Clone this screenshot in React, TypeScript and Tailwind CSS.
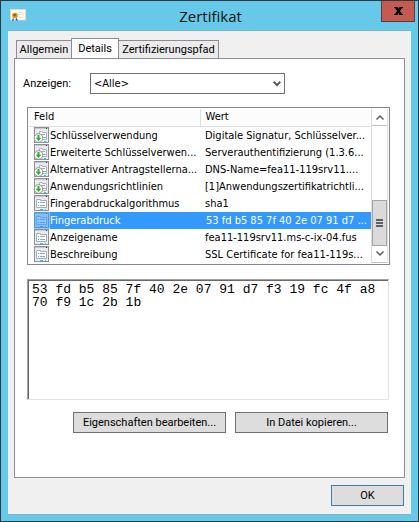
import React, { useState } from "react";

type Field = { name: string; value: string; extension?: boolean };

const fields: Field[] = [
  { name: "Schlüsselverwendung", value: "Digitale Signatur, Schlüsselver...", extension: true },
  { name: "Erweiterte Schlüsselverwen...", value: "Serverauthentifizierung (1.3.6...", extension: true },
  { name: "Alternativer Antragstellerna...", value: "DNS-Name=fea11-119srv11....", extension: true },
  { name: "Anwendungsrichtlinien", value: "[1]Anwendungszertifikatrichtli...", extension: true },
  { name: "Fingerabdruckalgorithmus", value: "sha1" },
  { name: "Fingerabdruck", value: "53 fd b5 85 7f 40 2e 07 91 d7 ..." },
  { name: "Anzeigename", value: "fea11-119srv11.ms-c-ix-04.fus" },
  { name: "Beschreibung", value: "SSL Certificate for fea11-119s..." },
];

function CertificateIcon() {
  return (
    <svg width="16" height="13" viewBox="0 0 16 13" aria-hidden="true" className="shrink-0">
      <rect x="0.5" y="0.5" width="15" height="10.5" fill="#fbfaf7" stroke="#f3d5b0" />
      <path d="M8 3.5h5M8 5.5h5M9 8.5h4" stroke="#dcdfe8" />
      <path d="M3 8l-1 4.5 2-1.5zM6.500 8l1.500 4.500-2.500-1.500z" fill="#2f62c4" />
      <circle cx="5" cy="6.500" r="2.800" fill="#d99a10" />
      <circle cx="4.600" cy="6" r="1.200" fill="#8f5f08" />
    </svg>
  );
}

function FieldIcon({ extension, selected }: { extension?: boolean; selected: boolean }) {
  return (
    <svg width="17" height="17" viewBox="0 0 17 17" aria-hidden="true" className="block shrink-0">
      <rect x="1.500" y="0.500" width="14" height="15" fill="#e9ebee" stroke="#8b9095" />
      <path d="M2 1.500h13" stroke="#c3c9ce" />
      <path d="M13 1.500h1" stroke="#3a4046" />
      {extension ? (
        <g>
          <path d="M6.500 12.500v-8h3v1h4v7z" fill="#fafbfc" stroke="#b0b4c0" />
          <path d="M8 7.500h4M10 10.500h3" stroke="#a3a6b2" />
          <path d="M11 14.500h2" stroke="#18d0f5" />
          <circle cx="5.500" cy="11" r="4.300" fill="#fff" stroke="#8b9095" />
          <path d="M4.500 8h2v2.800h1.800L5.500 13.900 2.700 10.800h1.800z" fill="#2fae22" />
        </g>
      ) : (
        <g>
          <path d="M3.500 12.500v-8h4v1h6v7z" fill="#fafbfc" stroke="#a9adba" />
          <path d="M7 7.500h5M7 10.500h5" stroke="#a3a6b2" />
          <path d="M5 7.500h1M5 10.500h1" stroke="#18c5ee" />
          <path d="M7 14.500h3M12 14.500h1" stroke="#18d0f5" />
        </g>
      )}
      {selected && <rect x="1" width="16" height="17" fill="#3399ff" fillOpacity="0.550" />}
    </svg>
  );
}

const tabs = [
  { name: "Allgemein", width: "w-[55px]" },
  { name: "Details", width: "w-12" },
  { name: "Zertifizierungspfad", width: "w-[100px]" },
];

export default function App() {
  const [active, setActive] = useState("Details");
  const [selected, setSelected] = useState("Fingerabdruck");

  return (
    <div className="flex min-h-screen w-full flex-col border border-[#2f3840] bg-[#66c9ea] px-[7px] pb-1.5 font-['DejaVu_Sans_Condensed','DejaVu_Sans',sans-serif] text-[11px] leading-[17px] text-black">
      <header className="flex h-[29px] items-start">
        <div className="w-8 shrink-0 pt-2 pl-0.5">
          <CertificateIcon />
        </div>
        <h1 className="flex-1 text-center font-['Open_Sans',sans-serif] text-[15px] leading-[30px] text-[#111]">Zertifikat</h1>
        <button aria-label="Schließen" className="-mr-1 flex h-[21px] w-[34px] items-center justify-center border border-t-0 border-[#5d3a40] bg-[#c55a50]">
          <svg width="9" height="8" viewBox="0 0 9 8" aria-hidden="true">
            <path d="M0 0h3.500l1 1.800L5.500 0H9v1H8L6 4l2 3h1v1H5.500l-1-1.800L3.500 8H0V7h1l2-3-2-3H0z" fill="#000" />
          </svg>
        </button>
      </header>

      <main className="flex flex-1 flex-col border-y border-[#7fb3ca] bg-[#f0f0f0] px-1.5 pt-[7px]">
        <div role="tablist" className="-mb-px flex items-end pl-0.5 font-['Roboto',sans-serif]">
          {tabs.map(({ name, width }) => (
            <button
              key={name}
              role="tab"
              aria-selected={name === active}
              onClick={() => setActive(name)}
              className={`${width} whitespace-nowrap ${
                name === active
                  ? "h-[21px] border border-b-0 border-[#8c8c98] bg-white pb-0.5"
                  : "h-[19px] border border-[#8c8c98] bg-[#ebebeb] first:border-r-0 last:border-l-0"
              }`}
            >
              {name}
            </button>
          ))}
        </div>

        <section className="flex flex-1 flex-col border border-[#8c8c98] bg-white px-3 pt-3.5">
          <div className="flex items-center">
            <label htmlFor="show" className="-ml-1 w-[67px] shrink-0 font-['Roboto',sans-serif]">Anzeigen:</label>
            <div className="relative h-[21px] w-[195px]">
              <select id="show" className="h-full w-full appearance-none border border-[#707070] bg-white pl-[3px]">
                <option>&lt;Alle&gt;</option>
              </select>
              <svg width="8" height="6" viewBox="0 0 8 6" aria-hidden="true" className="pointer-events-none absolute top-2 right-1">
                <path d="M0.700 0.800L4 4.100l3.300-3.300" fill="none" stroke="#555" strokeWidth="2" />
              </svg>
            </div>
          </div>

          <div className="mt-[13px] mr-[2px] flex border border-[#828790] p-px">
            <table className="min-w-0 flex-1 table-fixed border-collapse whitespace-nowrap">
              <thead>
                <tr className="h-[17px] bg-[#fcfcfc] text-left">
                  <th className="w-1/2 border-r border-b border-[#dedfe1] p-0 pl-[5px] leading-4 font-normal">Feld</th>
                  <th className="border-b border-[#dedfe1] p-0 pl-[5px] leading-4 font-normal">Wert</th>
                </tr>
              </thead>
              <tbody>
                {fields.map((f) => (
                  <tr key={f.name} onClick={() => setSelected(f.name)} className={f.name === selected ? "h-[17px] text-white" : "h-[17px]"}>
                    <td className="overflow-hidden p-0 pl-1">
                      <div className="flex">
                        <FieldIcon extension={f.extension} selected={f.name === selected} />
                        <span className={f.name === selected ? "flex-1 bg-[#3399ff]" : "flex-1"}>{f.name}</span>
                      </div>
                    </td>
                    <td className={f.name === selected ? "overflow-hidden bg-[#3399ff] p-0 pl-1.5" : "overflow-hidden p-0 pl-[5px]"}>{f.value}</td>
                  </tr>
                ))}
              </tbody>
            </table>
            <div className="flex w-[17px] shrink-0 flex-col border-x border-[#dcdcdc]">
              <button aria-label="Nach oben" className="flex h-[17px] items-center justify-center border-b border-[#c0c0c0]">
                <svg width="8" height="5" viewBox="0 0 8 5" aria-hidden="true">
                  <path d="M0.500 4.500L4 1l3.500 3.500" fill="none" stroke="#606060" strokeWidth="1.500" />
                </svg>
              </button>
              <div className="flex-1" />
              <div className="flex h-[46px] flex-col items-center justify-center gap-px border border-[#a6a6a6] bg-[#dadada]">
                <span className="h-0.5 w-[7px] bg-[#606060]" />
                <span className="h-0.5 w-[7px] bg-[#606060]" />
                <span className="h-0.5 w-[7px] bg-[#606060]" />
              </div>
              <button aria-label="Nach unten" className="flex h-[17px] items-center justify-center border-b border-[#c0c0c0]">
                <svg width="8" height="5" viewBox="0 0 8 5" aria-hidden="true">
                  <path d="M0.500 0.500L4 4l3.500-3.500" fill="none" stroke="#606060" strokeWidth="1.500" />
                </svg>
              </button>
            </div>
          </div>

          <div className="mt-3.5 mr-[3px] border border-t-[#a0a0a0] border-r-[#e3e3e3] border-b-[#e3e3e3] border-l-[#a0a0a0]">
            <textarea
              aria-label="Wert des Feldes"
              readOnly
              className="block h-[119px] w-full resize-none border-t border-l border-[#696969] px-[3px] py-0.5 font-['Liberation_Mono',monospace] text-[13px] leading-[13px] outline-none"
              value="53 fd b5 85 7f 40 2e 07 91 d7 f3 19 fc 4f a8 70 f9 1c 2b 1b"
            />
          </div>

          <div className="mt-3 mr-1 flex justify-end gap-[9px] font-['Roboto',sans-serif]">
            <button className="h-[21px] w-[153px] border border-[#707070] bg-[#dddddd]">Eigenschaften bearbeiten...</button>
            <button className="h-[21px] w-[153px] border border-[#707070] bg-[#dddddd]">In Datei kopieren...</button>
          </div>
        </section>

        <div className="flex justify-end pt-[7px] pr-px pb-2 font-['Roboto',sans-serif]">
          <button className="h-[21px] w-[73px] border border-[#3c7fb1] bg-[#dddddd]">OK</button>
        </div>
      </main>
    </div>
  );
}
